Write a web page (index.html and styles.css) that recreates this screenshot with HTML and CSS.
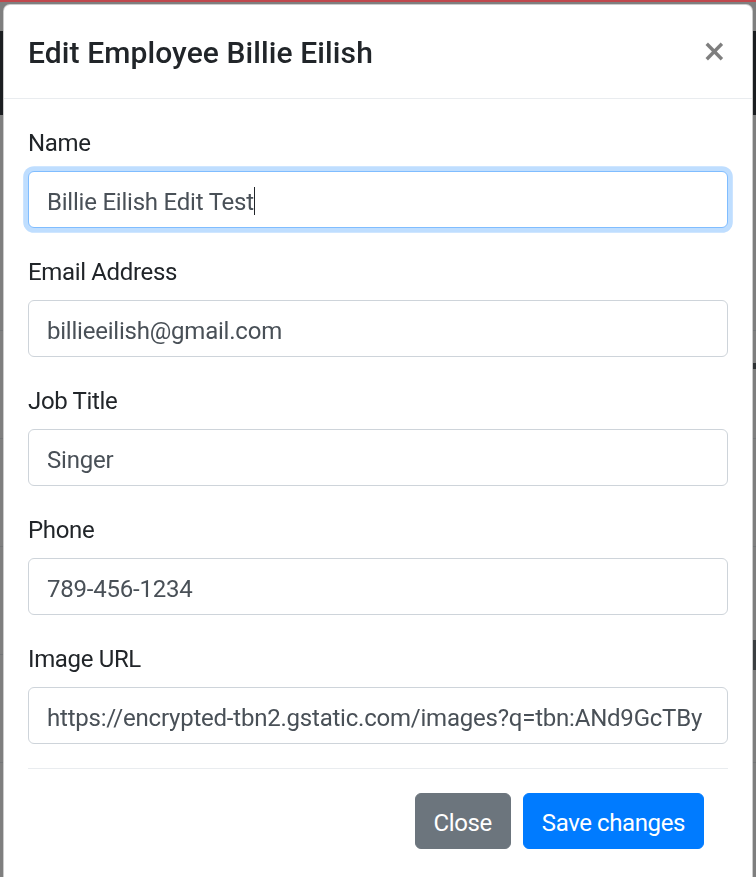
FILE: index.html
```
<!DOCTYPE html>
<html lang="en">
<head>
<meta charset="utf-8">
<title>Edit Employee</title>
<link rel="stylesheet" href="styles.css">
</head>
<body>
<div class="page">
  <div class="topline"></div>
  <div class="nav-gap"></div>
  <div class="navbar"></div>
  <div class="page-head"></div>
  <div class="row"><div class="row-btn row-btn-a"></div></div>
  <div class="row"></div>
  <div class="row"><div class="row-btn row-btn-b"></div></div>
  <div class="row"></div>
</div>

<div class="modal-content">
  <div class="modal-header">
    <h5 class="modal-title">Edit Employee Billie Eilish</h5>
    <button type="button" class="close" aria-label="Close">&times;</button>
  </div>
  <div class="modal-body">
    <form class="form">
      <div class="form-group">
        <label class="label" for="name">Name</label>
        <div class="field-wrap">
          <input class="form-control is-focused" id="name" type="text" value="Billie Eilish Edit Test">
          <span class="caret-ghost" aria-hidden="true">Billie Eilish Edit Test</span>
        </div>
      </div>
      <div class="form-group">
        <label class="label" for="email">Email Address</label>
        <input class="form-control" id="email" type="text" value="billieeilish@gmail.com">
      </div>
      <div class="form-group">
        <label class="label" for="job">Job Title</label>
        <input class="form-control" id="job" type="text" value="Singer">
      </div>
      <div class="form-group">
        <label class="label" for="phone">Phone</label>
        <input class="form-control" id="phone" type="text" value="789-456-1234">
      </div>
      <div class="form-group">
        <label class="label" for="img">Image URL</label>
        <input class="form-control" id="img" type="text" value="https://encrypted-tbn2.gstatic.com/images?q=tbn:ANd9GcTBy">
      </div>
      <div class="modal-footer">
        <button type="button" class="btn btn-secondary">Close</button>
        <button type="button" class="btn btn-primary">Save changes</button>
      </div>
    </form>
  </div>
</div>
</body>
</html>
```
FILE: styles.css
```
* { box-sizing: border-box; }

html, body {
  margin: 0;
  padding: 0;
}

body {
  width: 756px;
  height: 877px;
  overflow: hidden;
  background: #7f7f7f;
  font-family: Roboto, "Segoe UI", "Liberation Sans", sans-serif;
}

.page {
  display: flex;
  flex-direction: column;
}

.topline {
  height: 2px;
  background: #c0484d;
}

.nav-gap {
  height: 29px;
}

.navbar {
  height: 84px;
  background: #1b1e21;
}

.page-head {
  height: 216px;
  border-bottom: 1px solid #737577;
}

.row {
  position: relative;
  height: 108px;
  border-bottom: 1px solid #737577;
}

.row-btn {
  position: absolute;
  right: 0;
  width: 12px;
  background: #2f3235;
}

.row-btn-a {
  top: 32px;
  height: 6px;
}

.row-btn-b {
  top: 93px;
  height: 30px;
  background: #3c3f42;
}

/* modal */
.modal-content {
  position: fixed;
  left: 3px;
  top: 4px;
  width: 750px;
  height: 900px;
  background: #fff;
  border: 1px solid rgba(0, 0, 0, 0.2);
  border-radius: 7px;
  display: flex;
  flex-direction: column;
}

.modal-header {
  display: flex;
  align-items: flex-start;
  padding: 25px 24px 23px;
  border-bottom: 1px solid #e9ecef;
}

.modal-title {
  margin: 0;
  font-size: 30px;
  line-height: 45px;
  font-weight: 500;
  letter-spacing: 0.1px;
  color: #212529;
}

.close {
  margin: -25px -24px -23px auto;
  padding: 31px 25px 17px 23px;
  background: transparent;
  border: 0;
  font-family: "DejaVu Sans", sans-serif;
  font-size: 30px;
  font-weight: 700;
  line-height: 1;
  color: #000;
  opacity: 0.5;
  text-shadow: 0 1px 0 #fff;
  cursor: pointer;
}

.modal-body {
  padding: 24px 24px 0;
}

.form {
  display: flex;
  flex-direction: column;
}

.form-group {
  display: flex;
  flex-direction: column;
  margin-bottom: 24px;
}

.label {
  font-size: 24px;
  line-height: 36px;
  letter-spacing: -0.35px;
  color: #212529;
  padding-top: 2px;
  margin-bottom: 10px;
}

.field-wrap {
  position: relative;
}

.form-control {
  display: block;
  width: 100%;
  height: 57px;
  padding: 11px 18px 7px;
  font-family: inherit;
  font-size: 24px;
  line-height: 36px;
  letter-spacing: -0.22px;
  color: #495057;
  background: #fff;
  border: 1px solid #ced4da;
  border-radius: 6px;
  outline: none;
}

.form-control.is-focused {
  border-color: #80bdff;
  box-shadow: 0 0 0 4.8px rgba(0, 123, 255, 0.25);
}

.caret-ghost {
  position: absolute;
  left: 19px;
  top: 16px;
  height: 28px;
  font-size: 24px;
  line-height: 28px;
  letter-spacing: -0.22px;
  color: transparent;
  border-right: 1px solid #212529;
  pointer-events: none;
  white-space: pre;
}

.modal-footer {
  display: flex;
  justify-content: flex-end;
  align-items: center;
  padding: 18px;
  border-top: 1px solid #e9ecef;
}

.btn {
  margin: 6px;
  padding: 11px 18px 7px;
  font-family: inherit;
  font-size: 24px;
  line-height: 36px;
  letter-spacing: -0.4px;
  color: #fff;
  border: 1px solid transparent;
  border-radius: 6px;
  cursor: pointer;
}

.btn-secondary {
  background: #6c757d;
  border-color: #6c757d;
}

.btn-primary {
  background: #007bff;
  border-color: #007bff;
}
```
